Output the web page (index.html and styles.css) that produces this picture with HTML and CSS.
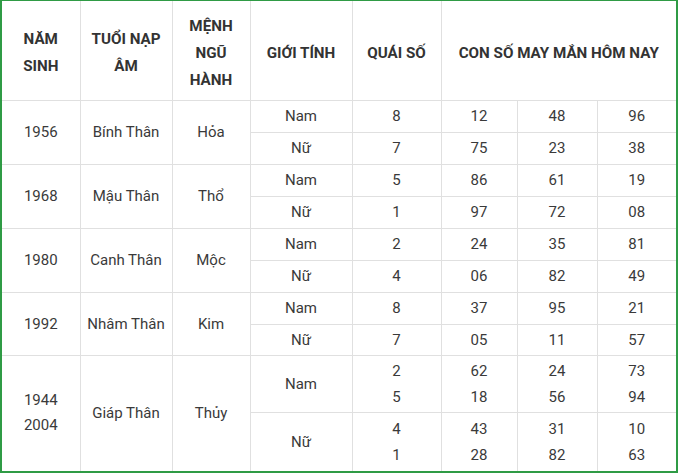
FILE: index.html
```html
<!DOCTYPE html>
<html lang="vi">
<head>
<meta charset="utf-8">
<link rel="stylesheet" href="styles.css">
</head>
<body>
<div class="frame">
<table class="tbl">
  <colgroup>
    <col class="c1"><col class="c2"><col class="c3"><col class="c4"><col class="c5"><col class="c6"><col class="c7"><col class="c8">
  </colgroup>
  <thead>
    <tr class="head">
      <th>NĂM SINH</th>
      <th>TUỔI NẠP ÂM</th>
      <th>MỆNH NGŨ HÀNH</th>
      <th>GIỚI TÍNH</th>
      <th>QUÁI SỐ</th>
      <th colspan="3">CON SỐ MAY MẮN HÔM NAY</th>
    </tr>
  </thead>
  <tbody>
    <tr class="r"><td rowspan="2">1956</td><td rowspan="2">Bính Thân</td><td rowspan="2">Hỏa</td><td>Nam</td><td>8</td><td>12</td><td>48</td><td>96</td></tr>
    <tr class="r"><td>Nữ</td><td>7</td><td>75</td><td>23</td><td>38</td></tr>
    <tr class="r"><td rowspan="2">1968</td><td rowspan="2">Mậu Thân</td><td rowspan="2">Thổ</td><td>Nam</td><td>5</td><td>86</td><td>61</td><td>19</td></tr>
    <tr class="r"><td>Nữ</td><td>1</td><td>97</td><td>72</td><td>08</td></tr>
    <tr class="r"><td rowspan="2">1980</td><td rowspan="2">Canh Thân</td><td rowspan="2">Mộc</td><td>Nam</td><td>2</td><td>24</td><td>35</td><td>81</td></tr>
    <tr class="r"><td>Nữ</td><td>4</td><td>06</td><td>82</td><td>49</td></tr>
    <tr class="r"><td rowspan="2">1992</td><td rowspan="2">Nhâm Thân</td><td rowspan="2">Kim</td><td>Nam</td><td>8</td><td>37</td><td>95</td><td>21</td></tr>
    <tr class="r r-short"><td>Nữ</td><td>7</td><td>05</td><td>11</td><td>57</td></tr>
    <tr class="r2 r2a"><td rowspan="2" class="years">1944<br>2004</td><td rowspan="2">Giáp Thân</td><td rowspan="2">Thủy</td><td>Nam</td><td class="multi">2<br>5</td><td class="multi">62<br>18</td><td class="multi">24<br>56</td><td class="multi">73<br>94</td></tr>
    <tr class="r2 r2b"><td>Nữ</td><td class="multi">4<br>1</td><td class="multi">43<br>28</td><td class="multi">31<br>82</td><td class="multi">10<br>63</td></tr>
  </tbody>
</table>
</div>
</body>
</html>
```
FILE: styles.css
```css
html, body {
  margin: 0;
  padding: 0;
  background: #ffffff;
}
body {
  font-family: Roboto, "Noto Sans", "Liberation Sans", sans-serif;
  color: #333333;
}
.frame {
  width: 674px;
  height: 470px;
  border-left: 2px solid #2f9b45;
  border-right: 2px solid #2f9b45;
  border-top: 1px solid #2f9b45;
  border-bottom: 2px solid #2f9b45;
  overflow: hidden;
}
.tbl {
  width: 674px;
  table-layout: fixed;
  border-collapse: collapse;
  border-style: hidden;
}
.c1 { width: 78px; }
.c2 { width: 92px; }
.c3 { width: 78px; }
.c4 { width: 102px; }
.c5 { width: 89px; }
.c6 { width: 76px; }
.c7 { width: 80px; }
.c8 { width: 79px; }
.tbl th, .tbl td {
  border: 1px solid #e0e0e0;
  text-align: center;
  vertical-align: middle;
  font-size: 15px;
}
.tbl th {
  padding: 6px 8px 0;
  font-size: 15.2px;
  font-weight: 700;
  line-height: 27px;
  color: #333333;
}
.head { height: 99px; }
.tbl td {
  padding: 0 2px;
  line-height: 20px;
  color: #3a3a3a;
}
.r { height: 32px; }
.r-short { height: 31px; }
.r2a { height: 57px; }
.r2b { height: 59px; }
.tbl td.years { line-height: 25px; padding-top: 0; }
.tbl td.multi { line-height: 26px; }
```
